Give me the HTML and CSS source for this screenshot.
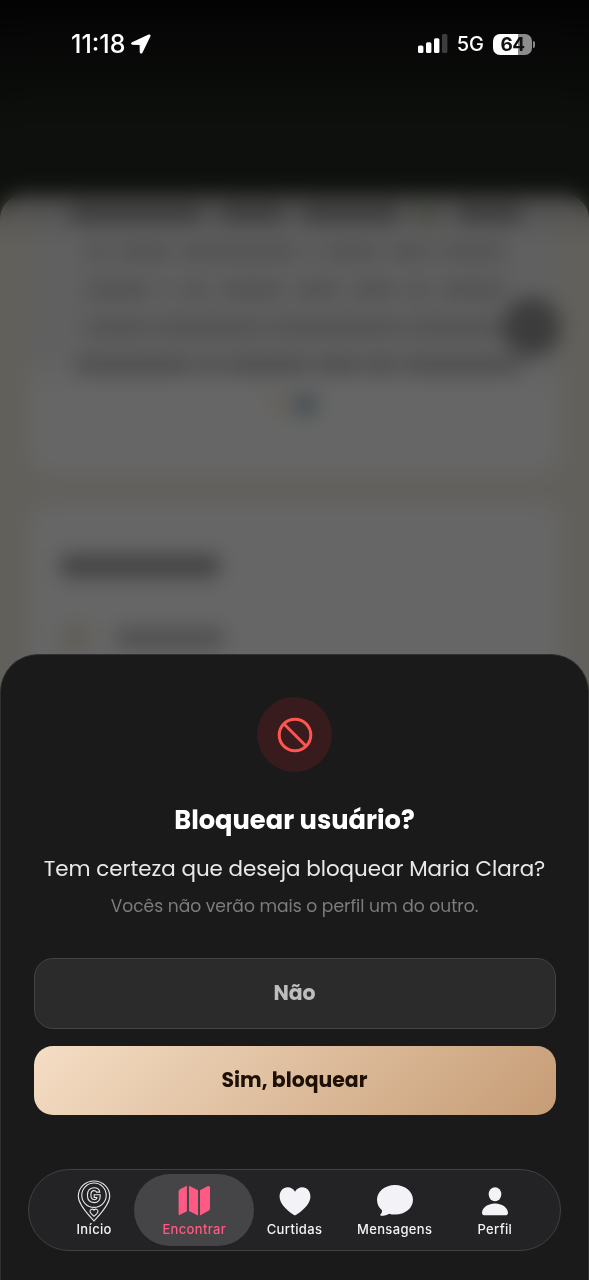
FILE: index.html
```
<!DOCTYPE html>
<html lang="pt-BR">
<head>
<meta charset="utf-8">
<title>Bloquear usuário</title>
<link rel="stylesheet" href="styles.css">
</head>
<body>
<div class="screen">
  <div class="profile" aria-hidden="true">
    <div class="profile-body">
      <div class="card bio">
        <div class="line dark"><i class="w120"></i><i class="w60"></i><i class="w90"></i><i class="w25 leaf"></i><i class="w60"></i></div>
        <div class="line"><i class="w20"></i><i class="w50"></i><i class="w110"></i><i class="w10"></i><i class="w50"></i><i class="w40"></i><i class="w60"></i></div>
        <div class="line"><i class="w60"></i><i class="w10"></i><i class="w25"></i><i class="w60"></i><i class="w40"></i><i class="w40"></i><i class="w20"></i><i class="w60"></i></div>
        <div class="line"><i class="w60"></i><i class="w100"></i><i class="w120"></i><i class="w90"></i></div>
        <div class="line strong"><i class="w110"></i><i class="w20"></i><i class="w70"></i><i class="w40"></i><i class="w30"></i><i class="w110"></i></div>
        <div class="emoji"><i class="sand"></i><i class="blue"></i></div>
      </div>
      <div class="card interests">
        <div class="heading-bar"></div>
        <div class="interest"><i class="tag"></i><i class="tag-name"></i></div>
      </div>
    </div>
    <div class="fab"></div>
  </div>

  <div class="overlay">
    <header class="status">
      <div class="clock">
        <span>11:18</span>
        <svg width="20" height="20" viewBox="0 0 20 20"><path d="M17.900 1.100 1.300 8.700c-.9.500-.6 1.500.3 1.500l7.600.2.1 7.700c0 1 1.100 1.200 1.600.3L18.900 1.900c.3-.7-.3-1.100-1-.8z" fill="#fff" stroke="#fff" stroke-width="1.200" stroke-linejoin="round"/></svg>
      </div>
      <div class="signals">
        <svg width="30" height="20" viewBox="0 0 30 20"><rect x="0" y="11.5" width="5.4" height="7.5" rx="1.6" fill="#fff"/><rect x="8" y="8.3" width="5.4" height="10.7" rx="1.6" fill="#fff"/><rect x="16" y="4.2" width="5.4" height="14.8" rx="1.6" fill="#fff"/><rect x="24" y="0" width="5.4" height="19" rx="1.6" fill="#3c3d3c"/></svg>
        <span class="network">5G</span>
        <div class="battery"><span class="level">64</span><i class="cap"></i></div>
      </div>
    </header>

    <section class="sheet">
      <div class="badge">
        <svg width="38" height="38" viewBox="0 0 38 38" fill="none" stroke="#ff5550" stroke-width="3"><circle cx="19" cy="19" r="15.8"/><path d="m8 8 22 22"/></svg>
      </div>
      <h1 class="title">Bloquear usuário?</h1>
      <p class="question">Tem certeza que deseja bloquear Maria Clara?</p>
      <p class="note">Vocês não verão mais o perfil um do outro.</p>
      <div class="actions">
        <button class="btn no">Não</button>
        <button class="btn yes">Sim, bloquear</button>
      </div>
      <nav class="tabs">
        <a class="tab">
          <svg class="pin" width="34" height="42" viewBox="0 0 34 42" fill="none" stroke="#e8e8ea" stroke-width="1.1"><path d="M17 41C14.500 37.500 1.300 26 1.300 16.200a15.700 15.200 0 0 1 31.400 0C32.700 26 19.500 37.500 17 41z"/><circle cx="17" cy="15.200" r="12.200"/><path d="M22.800 12.100h-3.300c-.5-1.100-1.300-1.500-2.500-1.500-2 0-3.100 1.700-3.100 4.500 0 2.900 1.200 4.600 3.300 4.600 1.500 0 2.500-.8 2.700-2.200h-2.700v-2.700h6v1.100c0 4.300-2.400 6.700-6.100 6.700-4.200 0-6.700-2.900-6.700-7.500s2.600-7.400 6.700-7.400c3.200 0 5.400 1.700 5.700 4.400z"/><path d="M17 36.200c-2.100-1.600-4-3-4-4.900 0-2.300 2.800-2.900 4-1 1.200-1.900 4-1.300 4 1 0 1.900-1.900 3.300-4 4.900z"/></svg>
          <span>Início</span>
        </a>
        <a class="tab active">
          <svg width="34" height="32" viewBox="0 0 34 32" fill="#ff5a83"><path d="M1.600 6.500Q1.600 5 2.900 4.300L9.900.8v25.400L3.100 29.800Q1.600 30.400 1.600 29z"/><path d="M12 .8l9 4.400v25.300L12 26.100z"/><path d="M23 5.200l7.500-4Q33 .2 33 2.600v21q0 1.400-1.100 2L23 30.500z"/></svg>
          <span>Encontrar</span>
        </a>
        <a class="tab">
          <svg width="34" height="32" viewBox="0 0 34 32" fill="#f3f3f7"><path d="M17 30.500C13.200 28.300 1.600 20.600 1.600 11.500 1.600 6.200 5.100 2.300 9.700 2.300c3.100 0 5.800 1.600 7.300 4.500 1.500-2.900 4.200-4.500 7.300-4.500 4.600 0 8.100 3.900 8.100 9.200 0 9.100-11.600 16.800-15.400 19z"/></svg>
          <span>Curtidas</span>
        </a>
        <a class="tab">
          <svg width="38" height="32" viewBox="0 0 38 32" fill="#f3f3f7"><path d="M19 0C29 0 37 6.400 37 14.800S29.200 29.600 19 29.600c-2.200 0-4.100-.3-5.900-.9-2.700 1.500-5.400 2.200-8 2-.9-.1-1.200-.9-.5-1.500 1.200-1.100 1.600-2.300 1.300-3.900C2.800 22.700 1 19.100 1 14.800 1 6.400 9 0 19 0z"/></svg>
          <span>Mensagens</span>
        </a>
        <a class="tab">
          <svg width="34" height="32" viewBox="0 0 34 32" fill="#f3f3f7"><ellipse cx="17" cy="9.300" rx="6.300" ry="7"/><path d="M7.300 30.300C5 30.300 4 29.500 4 27.700c0-4.100 5-9.300 13-9.300s13 5.200 13 9.300c0 1.800-1 2.600-3.300 2.600z"/></svg>
          <span>Perfil</span>
        </a>
      </nav>
    </section>
  </div>
</div>
</body>
</html>
```
FILE: styles.css
```
* { box-sizing: border-box; }
body { margin: 0; background: #000; font-family: Poppins, Inter, "Liberation Sans", sans-serif; }
h1, p { margin: 0; }
svg { display: block; }
.screen { display: grid; width: 589px; height: 1280px; overflow: hidden; }
.profile, .overlay { grid-area: 1 / 1; min-width: 0; }

/* Profile page underneath */
.profile { position: relative; height: 1280px; padding-top: 195px; background: linear-gradient(#060706, #151915 60px, #222a1f 130px, #222a1f 193px, #25281f 220px); }
.profile-body { display: flex; flex-direction: column; gap: 28px; height: 1085px; padding: 0 28px; border-radius: 24px 24px 0 0; background: linear-gradient(#c8c6c1, #f5f0e4 48px); }
.card { background: #fff; border-radius: 24px; }
.bio { height: 280px; padding-top: 10px; border-radius: 0 0 24px 24px; background: linear-gradient(#bbb, #f0f0f0 42px, #efefef 150px, #fff 195px); }
.line { display: flex; justify-content: space-between; align-items: center; height: 16px; margin: 0 56px 22px 58px; }
.line i { height: 17px; border-radius: 4px; background: #cacaca; }
.line.dark { margin: 0 40px 22px 43px; }
.line.dark i { height: 18px; background: #959595; }
.line.dark .leaf { background: #b2b8a0; }
.line.strong { margin: 0 40px 18px 47px; }
.line.strong i { background: #c0c0c0; }
.w10 { width: 10px; }
.w20 { width: 22px; }
.w25 { width: 25px; }
.w30 { width: 32px; }
.w40 { width: 44px; }
.w50 { width: 55px; }
.w60 { width: 64px; }
.w70 { width: 84px; }
.w90 { width: 98px; }
.w100 { width: 110px; }
.w110 { width: 118px; }
.w120 { width: 132px; }
.emoji { display: flex; justify-content: center; align-items: center; gap: 8px; height: 24px; }
.sand { width: 12px; height: 18px; background: #f5e8c8; }
.blue { width: 24px; height: 22px; margin-top: 4px; border-radius: 8px; background: #aebec9; }
.interests { flex: 1; padding: 52px 33px; }
.heading-bar { width: 158px; height: 22px; border-radius: 5px; background: #a3a3a3; }
.interest { display: flex; align-items: center; gap: 25px; margin-top: 48px; }
.tag { width: 30px; height: 26px; background: #efe9d8; }
.tag-name { width: 108px; height: 18px; border-radius: 4px; background: #c0c0c0; }
.fab { position: absolute; top: 297px; left: 503px; width: 58px; height: 60px; border-radius: 50%; background: #969696; }

.overlay { position: relative; display: flex; flex-direction: column; justify-content: space-between; height: 1280px; background: rgba(0, 0, 0, .6); -webkit-backdrop-filter: blur(10px); backdrop-filter: blur(10px); }

/* Status bar */
.status { display: flex; justify-content: space-between; padding: 30px 54px 0 71px; color: #fff; font-family: Inter, sans-serif; }
.clock { display: flex; align-items: center; gap: 6px; height: 28px; font-size: 25px; font-weight: 500; letter-spacing: 0; }
.signals { display: flex; align-items: center; height: 28px; }
.network { margin-left: 9px; font-size: 20px; font-weight: 500; }
.battery { display: flex; align-items: center; margin-left: 9px; }
.level { width: 39px; height: 21px; border-radius: 7px; background: linear-gradient(90deg, #fff 64%, #8c8c8c 64%); color: #111; font-size: 19px; font-weight: 700; line-height: 21px; letter-spacing: -.6px; text-align: center; }
.cap { width: 2px; height: 7px; margin-left: 1px; border-radius: 0 3px 3px 0; background: #888; }

/* Confirmation sheet */
.sheet { display: flex; flex-direction: column; align-items: center; height: 626.500px; padding: 42.500px 26.500px 0; border: 1px solid #303032; border-bottom: 0; border-radius: 38px 38px 0 0; background: #1a1a1b; text-align: center; }
.badge { display: grid; place-items: center; flex: none; width: 75px; height: 75px; border-radius: 50%; background: #381b1d; }
.title { margin-top: 31px; color: #fff; font-size: 25.700px; font-weight: 700; line-height: 34px; white-space: nowrap; }
.question { margin-top: 17px; color: #e9e9e9; font-size: 21.400px; line-height: 30px; white-space: nowrap; }
.note { margin-top: 9px; color: #7c7c7d; font-size: 17.130px; line-height: 26px; white-space: nowrap; }
.actions { display: grid; gap: 17px; width: 522px; margin-top: 38.500px; }
.btn { padding: 0; border: 0; border-radius: 19px; font: 700 20.400px/28px Poppins, Inter, sans-serif; }
.no { height: 71px; border: 1px solid #434344; background: #2b2b2c; color: #bdbdbd; }
.yes { height: 69.500px; background: linear-gradient(135deg, #f5dec5, #c69c75); color: #1f1005; }

/* Tab bar */
.tabs { display: grid; grid-template-columns: repeat(5, 100.200px); justify-content: center; width: 533px; height: 82.500px; margin-top: 53.500px; padding: 4px 0; border: 1px solid #414143; border-radius: 42px; background: #232325; }
.tab { display: flex; flex-direction: column; align-items: center; gap: 3px; padding-top: 11px; color: #f3f3f7; font: 500 13px/18px Inter, sans-serif; letter-spacing: .35px; }
.tab.active { height: 72.500px; margin: 0 -10px; border-radius: 37px; background: #454547; color: #ff5a83; }
.pin { margin: -5px 0; }
```
